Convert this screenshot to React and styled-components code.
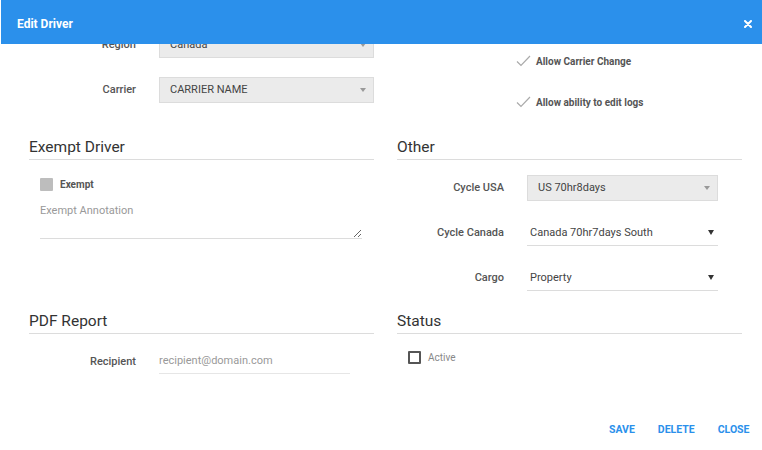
import React from 'react';
import styled, { createGlobalStyle } from 'styled-components';

const GlobalStyle = createGlobalStyle`
  html, body {
    margin: 0;
    padding: 0;
    background: #fff;
    font-family: Roboto, "Liberation Sans", sans-serif;
  }
  * { box-sizing: border-box; }
`;

const Modal = styled.div`
  width: 762px;
  height: 450px;
  display: flex;
  flex-direction: column;
  overflow: hidden;
  background: #fff;
`;

const Header = styled.div`
  height: 44px;
  flex: none;
  background: #2b90eb;
  margin-left: 1px;
  display: flex;
  align-items: center;
  justify-content: space-between;
  padding: 4px 8px 0 16px;
  position: relative;
  z-index: 2;
`;

const Title = styled.div`
  color: #fff;
  font-size: 12px;
  font-weight: 700;
`;

const CloseX = styled.button`
  border: none;
  background: none;
  padding: 0;
  width: 12px;
  height: 12px;
  display: flex;
  align-items: center;
  justify-content: center;
  cursor: pointer;
`;

const Body = styled.div`
  flex: 1;
  overflow: hidden;
`;

const Inner = styled.div`
  margin-top: -22px;
  padding: 0 20px 0 29px;
`;

const Columns = styled.div`
  display: grid;
  grid-template-columns: 345px 345px;
  column-gap: 23px;
`;

const Row = styled.div`
  height: 45px;
  display: flex;
  align-items: center;
  gap: 23px;
  padding-right: ${p => p.$pr || 0}px;
`;

const Label = styled.div`
  width: 107px;
  flex: none;
  text-align: right;
  font-size: 11px;
  font-weight: 500;
  color: #555;
`;

const Select = styled.div`
  flex: 1;
  height: 26px;
  display: flex;
  align-items: center;
  justify-content: space-between;
  padding: ${p => (p.$plain ? '0 4px 0 3px' : '0 7px 0 10px')};
  font-size: 11px;
  color: #444;
  background: ${p => (p.$plain ? '#fff' : '#ebebeb')};
  border: ${p => (p.$plain ? 'none' : '1px solid #dcdcdc')};
  border-bottom: 1px solid #dcdcdc;
`;

const Caret = styled.span`
  width: 0;
  height: 0;
  border-left: ${p => (p.$dark ? 3 : 3.5)}px solid transparent;
  border-right: ${p => (p.$dark ? 3 : 3.5)}px solid transparent;
  border-top: ${p => (p.$dark ? 5 : 4)}px solid ${p => (p.$dark ? '#333' : '#999')};
`;

const CheckList = styled.div`
  padding: 26px 0 0 119px;
  display: flex;
  flex-direction: column;
  gap: 15px;
`;

const CheckRow = styled.div`
  height: 26px;
  display: flex;
  align-items: center;
  gap: 5px;
  font-size: 10px;
  font-weight: 700;
  color: #555;
`;

const Section = styled.div`
  display: flex;
  flex-direction: column;
`;

const Heading = styled.div`
  margin-top: ${p => p.$mt}px;
  font-size: 15.5px;
  line-height: 20px;
  color: #333;
  padding-bottom: 2px;
  border-bottom: 1px solid #dcdcdc;
`;

const BoxRow = styled.div`
  display: flex;
  align-items: center;
  gap: ${p => p.$gap}px;
  margin: ${p => p.$mt}px 0 0 ${p => p.$ml}px;
  height: 14px;
  font-size: 10px;
  font-weight: ${p => (p.$bold ? 700 : 400)};
  color: ${p => (p.$bold ? '#555' : '#888')};
`;

const Box = styled.span`
  width: 13px;
  height: 13px;
  flex: none;
  background: ${p => (p.$filled ? '#bdbdbd' : '#fff')};
  border: ${p => (p.$filled ? 'none' : '2px solid #555')};
  border-radius: 1px;
`;

const Annotation = styled.textarea`
  display: block;
  margin: 11px 12px 0 11px;
  width: calc(100% - 23px);
  height: 37px;
  border: none;
  border-bottom: 1px solid #dcdcdc;
  padding: 2px 0 0;
  font-family: Roboto, "Liberation Sans", sans-serif;
  font-size: 11px;
  color: #444;
  resize: vertical;
  outline: none;
  &::placeholder { color: #999; }
`;

const TopGap = styled.div`
  height: 5px;
`;

const Field = styled.input`
  width: 191px;
  height: 26px;
  border: none;
  border-bottom: 1px solid #e6e6e6;
  padding: 0;
  font-family: Roboto, "Liberation Sans", sans-serif;
  font-size: 11px;
  color: #444;
  outline: none;
  &::placeholder { color: #999; }
`;

const RecipientRow = styled(Row)`
  height: 26px;
  margin-top: 14px;
`;

const Footer = styled.div`
  margin-top: 46px;
  display: flex;
  justify-content: flex-end;
  margin-right: -19px;
`;

const Action = styled.button`
  border: none;
  background: none;
  padding: 2px 11.5px;
  line-height: 16px;
  font-family: Roboto, "Liberation Sans", sans-serif;
  font-size: 10.5px;
  font-weight: 700;
  color: #2b90eb;
  cursor: pointer;
`;

const Tick = () => (
  <svg width="15" height="12" viewBox="0 0 15 12">
    <polyline points="1,6.5 5,10.5 14,1" fill="none" stroke="#aaa" strokeWidth="1.2" />
  </svg>
);

const App = () => (
  <>
    <GlobalStyle />
    <Modal>
      <Header>
        <Title>Edit Driver</Title>
        <CloseX aria-label="close">
          <svg width="8" height="8" viewBox="0 0 8 8">
            <path d="M1 1L7 7M7 1L1 7" stroke="#fff" strokeWidth="2" strokeLinecap="round" />
          </svg>
        </CloseX>
      </Header>
      <Body>
        <Inner>
          <Columns>
            <div>
              <Row>
                <Label>Region</Label>
                <Select>Canada<Caret /></Select>
              </Row>
              <Row>
                <Label>Carrier</Label>
                <Select>CARRIER NAME<Caret /></Select>
              </Row>
            </div>
            <CheckList>
              <CheckRow><Tick />Allow Carrier Change</CheckRow>
              <CheckRow><Tick />Allow ability to edit logs</CheckRow>
            </CheckList>

            <Section>
              <Heading $mt={22}>Exempt Driver</Heading>
              <BoxRow $mt={17} $ml={11} $gap={7} $bold>
                <Box $filled />Exempt
              </BoxRow>
              <Annotation placeholder="Exempt Annotation" />
            </Section>
            <Section>
              <Heading $mt={22}>Other</Heading>
              <TopGap />
              <Row $pr={24}>
                <Label>Cycle USA</Label>
                <Select>US 70hr8days<Caret /></Select>
              </Row>
              <Row $pr={24}>
                <Label>Cycle Canada</Label>
                <Select $plain>Canada 70hr7days South<Caret $dark /></Select>
              </Row>
              <Row $pr={24}>
                <Label>Cargo</Label>
                <Select $plain>Property<Caret $dark /></Select>
              </Row>
            </Section>

            <Section>
              <Heading $mt={11}>PDF Report</Heading>
              <RecipientRow>
                <Label>Recipient</Label>
                <Field placeholder="recipient@domain.com" />
              </RecipientRow>
            </Section>
            <Section>
              <Heading $mt={11}>Status</Heading>
              <BoxRow $mt={16} $ml={11} $gap={7}>
                <Box />Active
              </BoxRow>
            </Section>
          </Columns>
          <Footer>
            <Action>SAVE</Action>
            <Action>DELETE</Action>
            <Action>CLOSE</Action>
          </Footer>
        </Inner>
      </Body>
    </Modal>
  </>
);

export default App;
